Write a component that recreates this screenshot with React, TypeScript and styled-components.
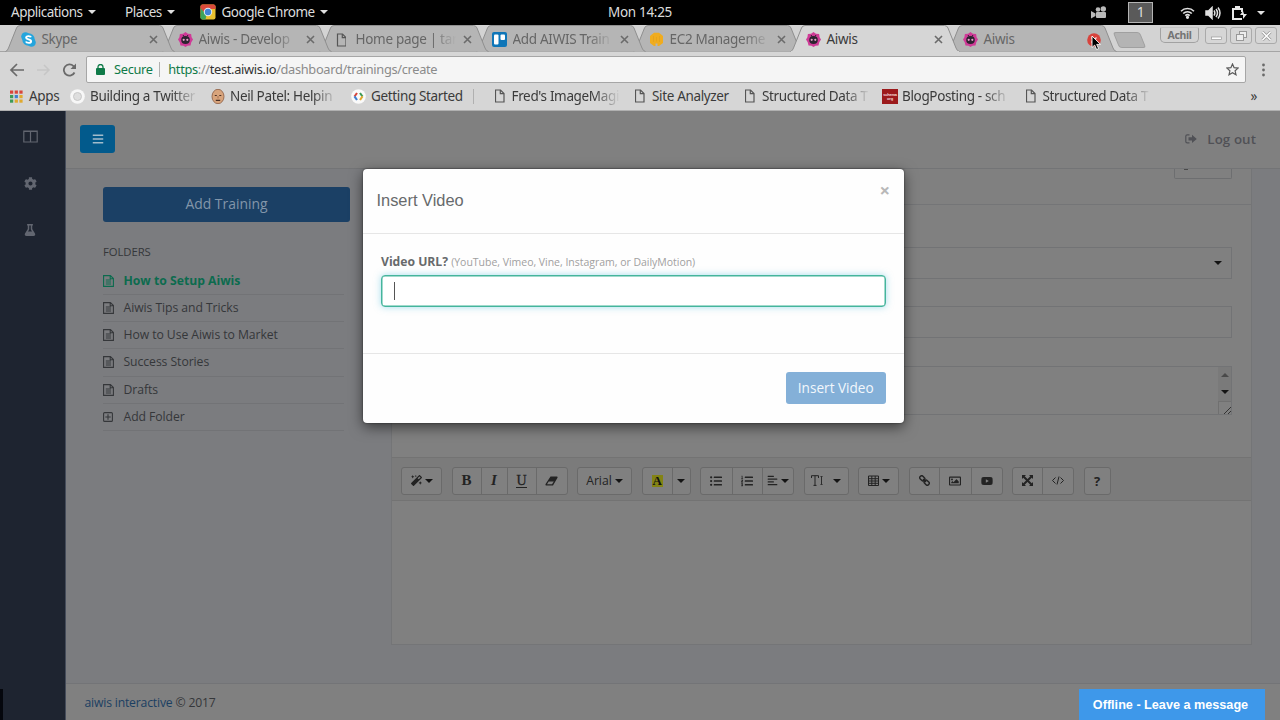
import React from "react";
import styled, { createGlobalStyle, css } from "styled-components";
import {
  FaBars, FaCog, FaFlask, FaMagic, FaListUl, FaListOl, FaAlignLeft,
  FaYoutube, FaRegImage,
} from "react-icons/fa";

const Global = createGlobalStyle`
  * { box-sizing: border-box; }
  html, body { margin: 0; padding: 0; }
  body { width: 1280px; height: 720px; overflow: hidden; background: #7b7c7f; }
`;

const ui = `"Noto Sans", "Open Sans", sans-serif`;
const web = `"Open Sans", "Noto Sans", sans-serif`;

const Screen = styled.div`
  position: relative;
  width: 1280px;
  height: 720px;
  display: flex;
  flex-direction: column;
  overflow: hidden;
  font-family: ${web};
  white-space: nowrap;
`;

const Caret = styled.i<{ $w?: number; $c?: string; $up?: boolean }>`
  flex: none;
  width: 0;
  height: 0;
  border-left: ${(p) => (p.$w ?? 8) / 2}px solid transparent;
  border-right: ${(p) => (p.$w ?? 8) / 2}px solid transparent;
  ${(p) =>
    p.$up
      ? css`border-bottom: ${(p.$w ?? 8) / 2}px solid ${p.$c ?? "#141414"};`
      : css`border-top: ${(p.$w ?? 8) / 2}px solid ${p.$c ?? "#141414"};`}
`;

/* ---------- desktop bar ---------- */
const DesktopBar = styled.header`
  height: 25px;
  flex: none;
  background: #000;
  color: #dcdcdc;
  display: grid;
  grid-template-columns: 1fr auto 1fr;
  align-items: center;
  font: 13.5px/24px ${ui};
  letter-spacing: -0.5px;
`;
const Menus = styled.div`
  display: flex;
  align-items: center;
  padding: 0 0 2px 11px;
`;
const Menu = styled.div<{ $w: number }>`
  display: flex;
  align-items: center;
  gap: 5.5px;
  width: ${(p) => p.$w}px;
`;
const Clock = styled.div`
  letter-spacing: -0.3px;
  padding-bottom: 2px;
`;
const Tray = styled.div`
  display: flex;
  align-items: center;
  justify-content: flex-end;
  padding: 0 15px 1px 0;
`;
const Workspace = styled.div`
  width: 25px;
  height: 21px;
  margin: 0 27px 0 21px;
  border: 1px solid #b4b4b4;
  background: #5a5a5a;
  text-align: center;
  line-height: 18px;
  font-size: 14px;
`;
const TrayIcons = styled.div`
  display: flex;
  align-items: center;
  gap: 10px;
`;

/* ---------- browser chrome ---------- */
const TabStrip = styled.div`
  height: 27px;
  flex: none;
  background: #d3d3d3;
  display: flex;
  padding-left: 5px;
  border-bottom: 1px solid #a5a5a5;
`;
const TabBox = styled.div<{ $active?: boolean; $z: number }>`
  position: relative;
  width: 170px;
  height: 27px;
  flex: none;
  margin-right: -13px;
  padding: 2px 16px 0 16px;
  z-index: ${(p) => p.$z};
  display: flex;
  align-items: center;
  font: 13.5px/25px ${ui};
  letter-spacing: -0.3px;
  color: ${(p) => (p.$active ? "#3a3a3a" : "#666")};
`;
const TabShape = styled.svg`
  position: absolute;
  inset: 0;
  z-index: -1;
`;
const TabIcon = styled.span`
  display: flex;
  width: 20.5px;
  flex: none;
`;
const TabLabel = styled.span<{ $fade?: boolean }>`
  width: 100.5px;
  ${(p) => p.$fade && css`mask-image: linear-gradient(90deg, #000 75%, transparent 100%);`}
`;
const TabClose = styled.span`
  margin-left: 7px;
  display: flex;
`;
const NewTab = styled.span`
  width: 27px;
  height: 16px;
  margin: 7px 0 0 12px;
  flex: none;
  transform: skewX(22deg);
  background: #b4b4b4;
  border: 1px solid #a0a0a0;
  border-radius: 3px;
`;
const WindowButtons = styled.div`
  margin-left: auto;
  display: flex;
  gap: 3px;
  padding: 2px 3px 0 0;
`;
const WinButton = styled.span`
  width: 22px;
  height: 17px;
  border: 1px solid #aaa;
  border-radius: 3px;
  background: #d6d6d6;
  display: grid;
  place-items: center;
`;
const UserButton = styled(WinButton)`
  width: 39px;
  height: 16px;
  margin-right: 3px;
  border-color: #a2a2a2;
  border-top-color: #c4c4c4;
  border-radius: 2px 2px 5px 5px;
  font: bold 10.5px/12px ${ui};
  letter-spacing: -0.4px;
  color: #747474;
  background: #d3d3d3;
`;
const NavBar = styled.div`
  height: 33px;
  flex: none;
  background: #d6d6d6;
  display: flex;
  align-items: center;
  padding: 2px 13px 0 9px;
`;
const NavIcons = styled.div`
  display: flex;
  gap: 11.5px;
  width: 77px;
  align-items: center;
`;
const AddressBar = styled.div`
  flex: 1;
  height: 27px;
  background: #f5f5f5;
  border: 1px solid #a6a6a6;
  border-radius: 2px;
  display: flex;
  align-items: center;
  padding: 0 6px 0 9px;
  margin-right: 14px;
  font: 12.8px/25px ${ui};
  color: #8b8b8b;
  letter-spacing: -0.32px;
`;
const Secure = styled.span`
  color: #0f7a48;
  margin-left: 9px;
  padding-right: 6.5px;
  letter-spacing: -0.3px;
`;
const Divider = styled.i`
  width: 1px;
  height: 15px;
  background: #b0b0b0;
  margin-right: 8px;
`;
const Host = styled.span<{ $c: string }>`
  color: ${(p) => p.$c};
`;
const StarSlot = styled.span`
  margin-left: auto;
  display: flex;
`;
const Bookmarks = styled.div`
  height: 26px;
  flex: none;
  background: #d6d6d6;
  border-bottom: 1px solid #b0b0b0;
  display: flex;
  align-items: center;
  padding: 0 0 3px 9px;
  font: 13.5px/22px ${ui};
  letter-spacing: -0.35px;
  color: #3a3a3a;
`;
const Bookmark = styled.span<{ $w: number }>`
  width: ${(p) => p.$w}px;
  flex: none;
  display: flex;
  align-items: center;
`;
const BookmarkIcon = styled.span<{ $w: number }>`
  width: ${(p) => p.$w}px;
  flex: none;
  display: flex;
`;
const BookmarkLabel = styled.span<{ $fade?: boolean }>`
  ${(p) => p.$fade && css`width: 108px; mask-image: linear-gradient(90deg, #000 76%, transparent 100%);`}
`;

/* ---------- page ---------- */
const Page = styled.div`
  position: relative;
  flex: 1;
  display: flex;
  min-height: 0;
`;
const SideNav = styled.nav`
  width: 66px;
  flex: none;
  background: #1e2430;
  border-right: 1px solid #454c5a;
  display: flex;
  flex-direction: column;
  align-items: center;
  padding: 18px 5px 0 0;
  gap: 31.5px;
  color: #626670;
`;
const NavIcon = styled.span`
  height: 15px;
  display: flex;
  align-items: center;
`;
const Main = styled.div`
  flex: 1;
  display: flex;
  flex-direction: column;
  background: #7b7c7f;
`;
const PageHeader = styled.div`
  height: 58px;
  flex: none;
  background: #808080;
  border-bottom: 1px solid #737476;
  display: flex;
  align-items: center;
  justify-content: space-between;
  padding: 0 24px 1px 14px;
`;
const MenuButton = styled.button`
  width: 35px;
  height: 28px;
  padding: 0;
  border: 0;
  border-radius: 3px;
  background: #025a8c;
  color: #a2bccb;
  display: grid;
  place-items: center;
`;
const LogOut = styled.a`
  display: flex;
  align-items: center;
  gap: 10px;
  color: #505156;
  font: 600 13.3px/20px ${web};
  letter-spacing: 0.1px;
`;
const Body = styled.div`
  flex: 1;
  display: flex;
  min-height: 0;
  padding: 0 28px 0 37px;
`;
const Folders = styled.aside`
  width: 247px;
  margin: 17.5px 41px 0 0;
  color: #35373a;
  font: 12.2px/18px ${web};
  letter-spacing: -0.06px;
`;
const AddTraining = styled.button`
  display: block;
  width: 100%;
  height: 35.5px;
  border: 0;
  border-radius: 3px;
  background: #1b4065;
  color: #8396aa;
  font: 13.9px/33px ${web};
  padding: 0 0 2px;
`;
const FolderTitle = styled.h5`
  margin: 21px 0 7px;
  font: 500 11.3px/18px ${web};
  height: 18px;
`;
const Folder = styled.a<{ $active?: boolean }>`
  width: 241px;
  height: 27.15px;
  display: flex;
  align-items: center;
  border-bottom: 1px solid #727376;
  ${(p) => p.$active && css`color: #0c6b4e; font-weight: 700; letter-spacing: 0;`}
`;
const FolderIcon = styled.span`
  width: 20.5px;
  display: flex;
`;
const Card = styled.section`
  width: 861px;
  height: 476px;
  background: #808080;
  border: 1px solid #747577;
  border-top: 0;
  display: flex;
  flex-direction: column;
`;
const CardTop = styled.div`
  height: 36px;
  border-bottom: 1px solid #747577;
  display: flex;
  justify-content: flex-end;
  padding-right: 19px;
`;
const ClippedButton = styled.span`
  width: 58px;
  height: 10px;
  border: 1px solid #6d6e70;
  border-top: 0;
  border-radius: 0 0 2px 2px;
  padding-left: 9px;
  &::before { content: ""; display: block; width: 4px; height: 1px; background: #4a4a4a; }
`;
const Form = styled.div`
  height: 252px;
  padding: 42px 19px 0;
`;
const Field = styled.div<{ $h: number; $mb?: number }>`
  height: ${(p) => p.$h}px;
  margin-bottom: ${(p) => p.$mb ?? 0}px;
  border: 1px solid #727375;
  display: flex;
  justify-content: flex-end;
`;
const SelectArrow = styled.span`
  display: flex;
  align-items: center;
  padding-right: 9px;
`;
const Scroll = styled.span`
  width: 13px;
  display: flex;
  flex-direction: column;
  align-items: center;
  background: #7a7a7a;
  padding-top: 6px;
  gap: 13px;
`;
const Grip = styled.span`
  width: 13px;
  height: 14px;
  margin-top: -6px;
  background: #808080;
  border: 1px solid #707070;
  border-width: 1px 0 0 1px;
  display: flex;
  align-items: flex-end;
  justify-content: flex-end;
`;
const Toolbar = styled.div`
  height: 44px;
  flex: none;
  background: #7b7b7b;
  border: 1px solid #737373;
  border-width: 1px 0;
  display: flex;
  align-items: center;
  padding: 3px 0 0 9px;
  gap: 9.5px;
`;
const Group = styled.div`
  display: flex;
  height: 28px;
  border: 1px solid #6a6a6a;
  border-radius: 3px;
  background: #808080;
`;
const Tool = styled.span<{ $w: number }>`
  width: ${(p) => p.$w}px;
  display: flex;
  align-items: center;
  justify-content: center;
  gap: 3px;
  color: #232323;
  font: 12.2px/24px ${web};
  & + & { border-left: 1px solid #6a6a6a; }
`;
const Serif = styled.span<{ $i?: boolean; $u?: boolean }>`
  font: bold 15px/15px "Liberation Serif", serif;
  ${(p) => p.$i && css`font-style: italic;`}
  ${(p) => p.$u && css`font-size: 14px; line-height: 13px; font-weight: 400; -webkit-text-stroke: 0.3px #232323; border-bottom: 1px solid #232323;`}
`;
const Highlight = styled.span`
  background: #838314;
  font: bold 13px/12px "Liberation Serif", serif;
  padding: 0 1px;
  color: #111;
`;
const Footer = styled.footer`
  height: 37px;
  flex: none;
  background: #808080;
  border-top: 1px solid #737477;
  padding: 1px 0 0 18.5px;
  font: 12.2px/36px ${web};
  letter-spacing: -0.18px;
  color: #35373a;
`;
const FooterLink = styled.a`
  color: #1b3f62;
`;

/* ---------- overlays ---------- */
const Modal = styled.div`
  position: absolute;
  left: 363px;
  top: 58px;
  width: 541px;
  height: 254px;
  background: #fefefe;
  border-radius: 4px;
  box-shadow: 0 4px 14px rgba(0, 0, 0, 0.55), 0 0 2px rgba(0, 0, 0, 0.6);
  color: #676a6c;
  display: flex;
  flex-direction: column;
`;
const ModalHead = styled.div`
  height: 65px;
  border-bottom: 1px solid #e6e6e6;
  display: flex;
  justify-content: space-between;
  padding: 21px 14px 0 13.5px;
  font: 16.4px/20px "Liberation Sans", Arial, sans-serif;
`;
const Dismiss = styled.span`
  margin-top: -10px;
  font: bold 18.5px/20px ${web};
  color: #b8b8b8;
`;
const ModalBody = styled.div`
  height: 120px;
  border-bottom: 1px solid #e6e6e6;
  padding: 18px 18px 0 18px;
`;
const Label = styled.label`
  display: block;
  height: 23px;
  font: bold 12.2px/20px ${web};
  letter-spacing: -0.02px;
  & small { font-size: 10.5px; font-weight: 400; color: #a0a0a0; }
`;
const UrlInput = styled.div`
  height: 32px;
  border: 1.5px solid #45b59c;
  border-radius: 4px;
  box-shadow: 0 0 7px rgba(80, 190, 220, 0.5), inset 0 0 0 0.5px #45b59c;
  background: #fff;
  padding: 6px 0 0 12px;
  &::before { content: ""; display: block; width: 1px; height: 18px; background: #555; }
`;
const ModalFoot = styled.div`
  padding: 18px 18.5px 0 0;
  display: flex;
  justify-content: flex-end;
`;
const InsertButton = styled.button`
  width: 99.5px;
  height: 32px;
  border: 0;
  border-radius: 3px;
  padding: 0 0 1px;
  background: #84b0d8;
  color: #f2f7fc;
  font: 13.6px/30px ${web};
`;
const Chat = styled.div`
  position: absolute;
  left: 1079px;
  bottom: 0;
  width: 186px;
  height: 31px;
  background: #3e98ea;
  color: #fff;
  padding: 1px 3px 0 0;
  text-align: center;
  font: bold 12.65px/31px "Liberation Sans", Arial, sans-serif;
`;
const EdgeMark = styled.i`
  position: absolute;
  left: 0;
  bottom: 0;
  width: 3px;
  height: 31px;
  background: #05070d;
`;
const Pointer = styled.svg`
  position: absolute;
  left: 1091px;
  top: 35px;
  z-index: 20;
`;

/* ---------- drawings ---------- */
const ChromeLogo = () => (
  <svg width="16" height="16" viewBox="0 0 16 16">
    <rect x=".5" y=".5" width="15" height="15" rx="2" fill="#e8c130" />
    <path d="M.5 9V2.500a2 2 0 0 1 2-2h11a2 2 0 0 1 2 2V5H8z" fill="#db4a3b" />
    <path d="M.5 4l6 7-1 4.500h-3a2 2 0 0 1-2-2z" fill="#3ea45a" />
    <circle cx="8" cy="8" r="4.200" fill="#e8eef4" />
    <circle cx="8" cy="8" r="3.200" fill="#4285d4" />
  </svg>
);
const Camera = () => (
  <svg width="16" height="14" viewBox="0 0 16 14" fill="#b9b9b9">
    <circle cx="7" cy="3.500" r="2.300" /><circle cx="12.300" cy="3" r="2.700" />
    <rect x="5" y="6" width="10" height="6" rx="1" /><path d="M0 5l4.500 2.500v2.500L0 12.500z" />
  </svg>
);
const Wifi = () => (
  <svg width="15" height="13" viewBox="0 0 15 13" fill="none" stroke="#e0e0e0" strokeWidth="1.600">
    <path d="M1 5.200a9.200 9.200 0 0 1 13 0M3.200 7.500a6 6 0 0 1 8.600 0M5.300 9.700a3.200 3.200 0 0 1 4.400 0" />
    <circle cx="7.500" cy="11.300" r=".8" fill="#e0e0e0" />
  </svg>
);
const Volume = () => (
  <svg width="16" height="14" viewBox="0 0 16 14" fill="none" stroke="#e0e0e0" strokeWidth="1.500">
    <path d="M1 5h2.500L7 1.500v11L3.500 9H1z" fill="#e0e0e0" />
    <path d="M9 4.500q1.700 2.500 0 5M11 3q3 4 0 8M13 1.500q4 5.500 0 11" />
  </svg>
);
const Battery = () => (
  <svg width="16" height="16" viewBox="0 0 16 16" fill="none" stroke="#e8e8e8" strokeWidth="2">
    <path d="M10 14H2V4h9v3" /><path d="M4 2h5" /><path d="M9 14h2" />
    <path d="M12 6l-3 4h3v4l4-5h-3z" fill="#e8e8e8" stroke="none" />
  </svg>
);
const Skype = () => (
  <svg width="15" height="15" viewBox="0 0 15 15">
    <circle cx="4.500" cy="4.500" r="4.300" fill="#25a5dd" /><circle cx="10.500" cy="10.500" r="4.300" fill="#25a5dd" />
    <circle cx="7.500" cy="7.500" r="6.200" fill="#25a5dd" />
    <path d="M10 5.200C9.500 3.800 5.200 3.500 5.100 5.700c0 2.200 5 1.200 5 3.500 0 2.300-4.600 2-5.200.3" fill="none" stroke="#fff" strokeWidth="1.900" />
  </svg>
);
const Robot = () => (
  <svg width="15" height="15" viewBox="0 0 15 15">
    <path d="M7.500 0l2.400 1.700 3.200.4.500 3.100L15 7.600l-1.700 2.700-.8 3.200-3 .2-2 1.300-2-1.300-3-.2-.8-3.200L0 7.600l1.400-2.400.5-3.100 3.200-.4z" fill="#cf3b97" />
    <ellipse cx="7.500" cy="8" rx="4.300" ry="3.900" fill="#2c2430" />
    <circle cx="5.700" cy="7.800" r="1.100" fill="#e8a0cc" /><circle cx="9.300" cy="7.800" r="1.100" fill="#e8a0cc" />
    <path d="M5 3l1 1.500M10 3L9 4.500" stroke="#2c2430" />
  </svg>
);
const Doc = ({ shift = 0 }: { shift?: number }) => (
  <svg width="11" height="14" viewBox={`${-shift} 0 11 14`} fill="none" stroke="#555" strokeWidth="1.200">
    <path d="M1 1h5L9.500 4.500V13H1z" /><path d="M5.800 1v3.700H9.500" />
  </svg>
);
const Trello = () => (
  <svg width="15" height="15" viewBox="0 0 15 15">
    <rect width="15" height="15" rx="2" fill="#0f76b8" />
    <rect x="2" y="2.500" width="4.500" height="10" rx="1" fill="#fff" /><rect x="8.500" y="2.500" width="4.500" height="5.500" rx="1" fill="#fff" />
  </svg>
);
const Ec2 = () => (
  <svg width="15" height="15" viewBox="0 0 15 15">
    <path d="M5 .8h5L14 4v7l-4 3H8.500v-2.500h-2V14H5l-4-3V4z" fill="#f0ac1e" />
    <path d="M4.500 4v6M7.500 5v4.500M10.500 4v6" stroke="#e6a31b" />
  </svg>
);
const Cross = ({ c = "#6b6b6b" }: { c?: string }) => (
  <svg width="9" height="9" viewBox="0 0 9 9" stroke={c} strokeWidth="1.600"><path d="M1 1l7 7M8 1L1 8" /></svg>
);
const HotClose = () => (
  <svg width="14" height="14" viewBox="0 0 14 14"><circle cx="7" cy="7" r="6.800" fill="#d8433c" /><path d="M4.500 4.500l5 5M9.500 4.500l-5 5" stroke="#f4dada" strokeWidth="1.400" /></svg>
);
const AppsGrid = () => (
  <svg width="14" height="13" viewBox="0 0 14 13">
    {["#d8453a", "#d8453a", "#d8453a", "#3d9a56", "#3f7fd0", "#e0a92e", "#3d9a56", "#e0a92e", "#e0a92e"].map((c, i) => (
      <rect key={i} x={1 + (i % 3) * 4.7} y={0.5 + Math.floor(i / 3) * 4.5} width="3.200" height="3.200" fill={c} />
    ))}
  </svg>
);
const Ring = () => (
  <svg width="15" height="15" viewBox="0 0 15 15"><circle cx="7.500" cy="7.500" r="7.300" fill="#f7f7f7" /><circle cx="7.500" cy="7.500" r="4" fill="#dedede" stroke="#c8c8c8" /></svg>
);
const Face = () => (
  <svg width="14" height="15" viewBox="0 0 14 15">
    <ellipse cx="7" cy="7.500" rx="6" ry="7.200" fill="#d8a47c" stroke="#8a5a40" strokeWidth=".8" />
    <path d="M3.800 6.500h2M8.300 6.500h2M4.800 11.300h4.400" stroke="#4a3025" strokeWidth="1.200" /><path d="M7 7v2.500" stroke="#a87050" />
  </svg>
);
const Dev = () => (
  <svg width="15" height="15" viewBox="0 0 15 15" fill="none" strokeWidth="2.100">
    <circle cx="7.500" cy="7.500" r="7.300" fill="#fafafa" />
    <path d="M6 4L3.500 7.500" stroke="#d8453a" /><path d="M3.500 7.300L6 11" stroke="#3f7fd0" />
    <path d="M9 4l2.500 3.500" stroke="#3d9a56" /><path d="M11.500 7.300L9 11" stroke="#e0a92e" />
  </svg>
);
const SchemaMark = styled.span`
  width: 16px;
  height: 15px;
  background: #9c1a1c;
  color: #f1dada;
  text-align: center;
  font: bold 4px/4px "Liberation Sans", sans-serif;
  letter-spacing: -0.2px;
  padding-top: 4px;
  white-space: pre-line;
`;
const TableIcon = () => (
  <svg width="11" height="11" viewBox="0 0 11 11" fill="none" stroke="#232323"><path d="M.5 1h10v9.500H.5zM.5 3.700h10M.5 6h10M.5 8.300h10M3.800 1v9.500M7.200 1v9.500" /></svg>
);
const ExpandIcon = () => (
  <svg width="11" height="11" viewBox="0 0 11 11" fill="#232323">
    <path d="M0 0h4L0 4zM11 0v4L7 0zM0 11V7l4 4zM11 11H7l4-4z" /><path d="M1 1l9 9M10 1l-9 9" stroke="#232323" strokeWidth="2" />
  </svg>
);
const EraserIcon = () => (
  <svg width="13" height="10" viewBox="0 0 13 10" fill="#232323">
    <path d="M5.500.5H12q1 .2.500 1.200L8 9.500H1Q0 9 .6 8zM2 8.300h5L8.800 5.500H3.700z" fillRule="evenodd" />
  </svg>
);
const ChainIcon = () => (
  <svg width="11" height="11" viewBox="0 0 11 11" fill="none" stroke="#232323" strokeWidth="1.400">
    <rect x="-2.700" y="-1.900" width="5.400" height="3.800" rx="1.700" transform="translate(3.300 3.300) rotate(45)" />
    <rect x="-2.700" y="-1.900" width="5.400" height="3.800" rx="1.700" transform="translate(7.700 7.700) rotate(45)" />
    <path d="M4 4l3 3" />
  </svg>
);
const CodeIcon = () => (
  <svg width="12" height="9" viewBox="0 0 12 9" fill="none" stroke="#232323" strokeWidth="1"><path d="M3.500 1.500l-3 3 3 3M8.500 1.500l3 3-3 3M7 .5L5 8.500" /></svg>
);
const TextHeightIcon = () => (
  <svg width="12" height="11" viewBox="0 0 12 11" fill="none" stroke="#232323">
    <path d="M.5 3V.7h7V3M4 .7v9.600M2.500 10.400h3" /><path d="M10.500 1.500v8M9.500 2l1-1 1 1M9.500 9l1 1 1-1" strokeWidth=".9" />
  </svg>
);
const HelpIcon = styled.span`
  font: bold 13px/14px ${web};
`;
const ExitIcon = () => (
  <svg width="12" height="10" viewBox="0 0 12 10" fill="none" stroke="#505156" strokeWidth="1.200">
    <path d="M4.500.8H2.200Q.8.800.8 2.200v5.200q0 1.400 1.400 1.400h2.300" /><path d="M3.500 3.300H7V.8L11.800 5 7 9V6.500H3.500z" fill="#505156" stroke="none" />
  </svg>
);
const FileText = () => (
  <svg width="11" height="12" viewBox="0 0 11 12" fill="none" stroke="currentColor" strokeWidth="1.100">
    <path d="M.6.600H7.400L10.400 3.500V11.400H.6zM7.200.600V3.700H10.400M2.800 5h5.300M2.800 7h5.300M2.800 9h5.300" />
  </svg>
);
const PlusBox = () => (
  <svg width="10" height="10" viewBox="0 0 10 10" fill="none" stroke="#35373a" strokeWidth="1.100"><rect x=".6" y=".6" width="8.800" height="8.800" rx="1" /><path d="M5 2.300v5.400M2.300 5h5.400" /></svg>
);
const Columns = () => (
  <svg width="15" height="13" viewBox="0 0 15 13" fill="none" stroke="#626670" strokeWidth="1.200"><path d="M.8 1h13.400v11H.8zM7.500 1v11M.8 1.500h13.400" /></svg>
);

type TabProps = { icon: React.ReactNode; label: string; fade?: boolean; active?: boolean; z: number; hot?: boolean };
const Tab = ({ icon, label, fade, active, z, hot }: TabProps) => (
  <TabBox $active={active} $z={z}>
    <TabShape width="170" height="27" viewBox="0 0 170 27">
      <path d="M.5 26.500Q2.500 26 3.500 23L11.500 3Q12.500.5 15 .5H154.500Q157 .5 158 3L166 23Q167 26 169.500 26.500" fill={active ? "#d6d6d6" : "#b5b5b5"} stroke="#8f8f8f" />
      {active && <path d="M1 26.500h168" stroke="#d6d6d6" />}
    </TabShape>
    <TabIcon>{icon}</TabIcon>
    <TabLabel $fade={fade}>{label}</TabLabel>
    <TabClose>{hot ? <HotClose /> : <Cross />}</TabClose>
  </TabBox>
);

const folders = ["How to Setup Aiwis", "Aiwis Tips and Tricks", "How to Use Aiwis to Market", "Success Stories", "Drafts"];

export default function App() {
  return (
    <Screen>
      <Global />
      <DesktopBar>
        <Menus>
          <Menu $w={114}>Applications<Caret $w={9} $c="#e0e0e0" /></Menu>
          <Menu $w={75}>Places<Caret $w={9} $c="#e0e0e0" /></Menu>
          <Menu $w={130}><ChromeLogo />Google Chrome<Caret $w={9} $c="#e0e0e0" /></Menu>
        </Menus>
        <Clock>Mon 14:25</Clock>
        <Tray>
          <Camera />
          <Workspace>1</Workspace>
          <TrayIcons><Wifi /><Volume /><Battery /><Caret $w={9} $c="#e0e0e0" /></TrayIcons>
        </Tray>
      </DesktopBar>

      <TabStrip>
        <Tab z={7} icon={<Skype />} label="Skype" />
        <Tab z={6} icon={<Robot />} label="Aiwis - Develop" fade />
        <Tab z={5} icon={<Doc shift={1.5} />} label="Home page | tar" fade />
        <Tab z={4} icon={<Trello />} label="Add AIWIS Train" fade />
        <Tab z={3} icon={<Ec2 />} label="EC2 Manageme" fade />
        <Tab z={9} icon={<Robot />} label="Aiwis" active />
        <Tab z={2} icon={<Robot />} label="Aiwis" hot />
        <NewTab />
        <WindowButtons>
          <UserButton>Achil</UserButton>
          <WinButton><svg width="11" height="10"><rect x=".5" y="6" width="10" height="2.500" fill="#fff" stroke="#999" strokeWidth=".7" /></svg></WinButton>
          <WinButton><svg width="11" height="10" fill="#eee" stroke="#999"><rect x="3.500" y=".5" width="7" height="6" /><rect x=".5" y="3.500" width="7" height="6" /></svg></WinButton>
          <WinButton><svg width="11" height="10"><path d="M1.500 1l8 8M9.500 1l-8 8" stroke="#999" strokeWidth="3" /><path d="M1.500 1l8 8M9.500 1l-8 8" stroke="#fff" strokeWidth="1.500" /></svg></WinButton>
        </WindowButtons>
      </TabStrip>

      <NavBar>
        <NavIcons>
          <svg width="15" height="14" viewBox="0 0 15 14" fill="none" stroke="#6a6a6a" strokeWidth="1.700"><path d="M15 7H2M8 1L2 7l6 6" /></svg>
          <svg width="15" height="14" viewBox="0 0 15 14" fill="none" stroke="#c6c6c6" strokeWidth="1.500"><path d="M1 7h12M8 2l5 5-5 5" /></svg>
          <svg width="15" height="14" viewBox="0 0 15 14" fill="none" stroke="#6a6a6a" strokeWidth="1.800"><path d="M12.500 9.500A5.600 5.600 0 1 1 11.500 3.200L13 5" /><path d="M14 .5V6H8.500z" fill="#6a6a6a" stroke="none" /></svg>
        </NavIcons>
        <AddressBar>
          <svg width="9" height="11" viewBox="0 0 9 11"><rect y="4" width="9" height="7" rx="1" fill="#0f7a48" /><path d="M2 5V3a2.500 2.500 0 0 1 5 0v2" fill="none" stroke="#0f7a48" strokeWidth="1.300" /></svg>
          <Secure>Secure</Secure>
          <Divider />
          <span><Host $c="#0f7a48">https</Host>://<Host $c="#333">test.aiwis.io</Host>/dashboard/trainings/create</span>
          <StarSlot><svg width="13" height="13" viewBox="0 0 13 13" fill="none" stroke="#5a5a5a" strokeWidth="1.200"><path d="M6.500 1l1.600 3.700 4 .4-3 2.700.9 4-3.500-2.100L3 11.800l.9-4-3-2.700 4-.4z" /></svg></StarSlot>
        </AddressBar>
        <svg width="7" height="14" viewBox="0 0 7 14" fill="#6a6a6a"><circle cx="3.500" cy="2" r="1.400" /><circle cx="3.500" cy="7" r="1.400" /><circle cx="3.500" cy="12" r="1.400" /></svg>
      </NavBar>

      <Bookmarks>
        <Bookmark $w={61}><BookmarkIcon $w={20}><AppsGrid /></BookmarkIcon><BookmarkLabel>Apps</BookmarkLabel></Bookmark>
        <Bookmark $w={141}><BookmarkIcon $w={20}><Ring /></BookmarkIcon><BookmarkLabel $fade>Building a Twitter</BookmarkLabel></Bookmark>
        <Bookmark $w={140}><BookmarkIcon $w={19}><Face /></BookmarkIcon><BookmarkLabel $fade>Neil Patel: Helpin</BookmarkLabel></Bookmark>
        <Bookmark $w={122}><BookmarkIcon $w={20}><Dev /></BookmarkIcon><BookmarkLabel>Getting Started</BookmarkLabel></Bookmark>
        <Bookmark $w={21.5}><Divider /></Bookmark>
        <Bookmark $w={140.5}><BookmarkIcon $w={17}><Doc shift={-0.5} /></BookmarkIcon><BookmarkLabel $fade>Fred's ImageMagi</BookmarkLabel></Bookmark>
        <Bookmark $w={110}><BookmarkIcon $w={17}><Doc shift={-0.5} /></BookmarkIcon><BookmarkLabel>Site Analyzer</BookmarkLabel></Bookmark>
        <Bookmark $w={137}><BookmarkIcon $w={17}><Doc shift={-0.5} /></BookmarkIcon><BookmarkLabel $fade>Structured Data T</BookmarkLabel></Bookmark>
        <Bookmark $w={143.5}><BookmarkIcon $w={20}><SchemaMark>{"schema\norg"}</SchemaMark></BookmarkIcon><BookmarkLabel $fade>BlogPosting - sch</BookmarkLabel></Bookmark>
        <Bookmark $w={225}><BookmarkIcon $w={17}><Doc shift={-0.5} /></BookmarkIcon><BookmarkLabel $fade>Structured Data T</BookmarkLabel></Bookmark>
        <span>»</span>
      </Bookmarks>

      <Page>
        <SideNav>
          <NavIcon><Columns /></NavIcon>
          <NavIcon><FaCog size={13} /></NavIcon>
          <NavIcon><FaFlask size={12} /></NavIcon>
        </SideNav>
        <Main>
          <PageHeader>
            <MenuButton><FaBars size={12} /></MenuButton>
            <LogOut><ExitIcon />Log out</LogOut>
          </PageHeader>
          <Body>
            <Folders>
              <AddTraining>Add Training</AddTraining>
              <FolderTitle>FOLDERS</FolderTitle>
              {folders.map((f, i) => (
                <Folder key={f} $active={i === 0}><FolderIcon><FileText /></FolderIcon>{f}</Folder>
              ))}
              <Folder><FolderIcon><PlusBox /></FolderIcon>Add Folder</Folder>
            </Folders>
            <Card>
              <CardTop><ClippedButton /></CardTop>
              <Form>
                <Field $h={32} $mb={27}><SelectArrow><Caret /></SelectArrow></Field>
                <Field $h={32} $mb={28} />
                <Field $h={49}><Scroll><Caret $up $c="#4a4a4a" /><Caret /><Grip><svg width="8" height="8" stroke="#333"><path d="M1 8l7-7M5 8l3-3" /></svg></Grip></Scroll></Field>
              </Form>
              <Toolbar>
                <Group><Tool $w={39}><FaMagic size={11} /><Caret /></Tool></Group>
                <Group><Tool $w={28}><Serif>B</Serif></Tool><Tool $w={26}><Serif $i>I</Serif></Tool><Tool $w={29}><Serif $u>U</Serif></Tool><Tool $w={31}><EraserIcon /></Tool></Group>
                <Group><Tool $w={53}>Arial<Caret /></Tool></Group>
                <Group><Tool $w={29.5}><Highlight>A</Highlight></Tool><Tool $w={17.5}><Caret /></Tool></Group>
                <Group><Tool $w={30.5}><FaListUl size={12} /></Tool><Tool $w={30.5}><FaListOl size={12} /></Tool><Tool $w={31}><FaAlignLeft size={11} /><Caret /></Tool></Group>
                <Group><Tool $w={43}><TextHeightIcon />&nbsp;<Caret /></Tool></Group>
                <Group><Tool $w={39}><TableIcon /><Caret /></Tool></Group>
                <Group><Tool $w={29.5}><ChainIcon /></Tool><Tool $w={31.5}><FaRegImage size={12} /></Tool><Tool $w={31}><FaYoutube size={12} /></Tool></Group>
                <Group><Tool $w={28.5}><ExpandIcon /></Tool><Tool $w={31.5}><CodeIcon /></Tool></Group>
                <Group><Tool $w={25}><HelpIcon>?</HelpIcon></Tool></Group>
              </Toolbar>
            </Card>
          </Body>
          <Footer><FooterLink>aiwis interactive</FooterLink> © 2017</Footer>
        </Main>
        <EdgeMark />
        <Modal>
          <ModalHead>Insert Video<Dismiss>×</Dismiss></ModalHead>
          <ModalBody>
            <Label>Video URL? <small>(YouTube, Vimeo, Vine, Instagram, or DailyMotion)</small></Label>
            <UrlInput />
          </ModalBody>
          <ModalFoot><InsertButton>Insert Video</InsertButton></ModalFoot>
        </Modal>
        <Chat>Offline - Leave a message</Chat>
      </Page>
      <Pointer width="11" height="16" viewBox="0 0 11 16"><path d="M1 1v11.500l2.700-2.400 1.900 4.400 2-.9-1.900-4.200H9.500z" fill="#000" stroke="#fff" strokeWidth=".9" /></Pointer>
    </Screen>
  );
}
